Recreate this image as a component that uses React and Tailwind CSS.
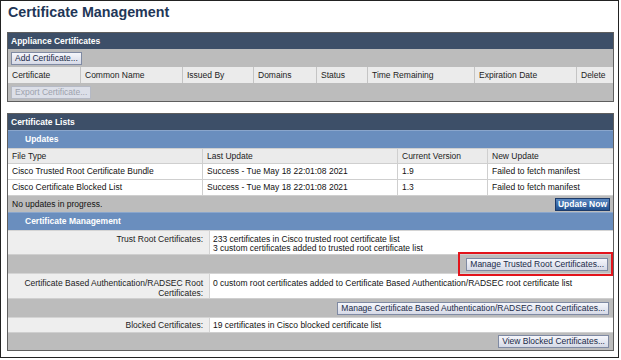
import React from "react";

const btn =
  "h-[13px] px-[3px] leading-[11px] border border-[#7f8aa3] bg-gradient-to-b from-[#f5f6fb] to-[#d6dae7] text-[#1a2a48] whitespace-nowrap";

function DarkHeader({ children }) {
  return (
    <div className="h-[16px] bg-[#3d4f68] text-white font-bold flex items-center pl-[3px]">
      {children}
    </div>
  );
}

function SubHeader({ children }) {
  return (
    <div className="h-[18px] bg-[#6a8ebe] text-white font-bold flex items-center pl-[17px] border-t border-[#8aa6cc]">
      {children}
    </div>
  );
}

const applianceCols = [
  ["Certificate", "w-[72px]"],
  ["Common Name", "w-[102px]"],
  ["Issued By", "w-[71px]"],
  ["Domains", "w-[63px]"],
  ["Status", "w-[51px]"],
  ["Time Remaining", "w-[107px]"],
  ["Expiration Date", "w-[102px]"],
  ["Delete", "flex-1"],
];

const updCols = ["w-[194px]", "w-[195px]", "w-[90px]", "flex-1"];

function UpdRow({ cells, header }) {
  return (
    <div
      className={
        "flex border-t border-[#cfcfcf] " +
        (header ? "h-[15px] bg-[#ebebeb] text-[#222]" : "h-[16px] bg-white")
      }
    >
      {cells.map((c, i) => (
        <div
          key={i}
          className={
            updCols[i] +
            " flex items-center pl-[4px] whitespace-nowrap " +
            (i > 0 ? "border-l border-[#cfcfcf]" : "")
          }
        >
          {c}
        </div>
      ))}
    </div>
  );
}

function LabelRow({ label, children, h, pt, leading }) {
  return (
    <div className={"flex border-t border-[#d4d4d4] " + h}>
      <div
        className={
          "w-[201px] bg-[#eeeeee] text-right pr-[6px] pl-[4px] text-[#222] " + pt + " " + leading
        }
      >
        {label}
      </div>
      <div className={"flex-1 bg-white pl-[3px] border-l border-[#d4d4d4] " + pt + " " + leading}>
        {children}
      </div>
    </div>
  );
}

function GrayRow({ h, children, pr = "pr-[5px]" }) {
  return (
    <div className={"bg-[#bcbcbc] flex items-center justify-end border-t border-[#cfcfcf] " + h + " " + pr}>
      {children}
    </div>
  );
}

export default function App() {
  return (
    <div className="w-[621px] h-[360px] bg-white font-['Liberation_Sans',Arial,sans-serif] text-[8.5px] text-[#111]">
      <div className="w-[619px] h-[358px] border border-[#222] pt-[2px] pl-[6px]">
        <h1 className="h-[18px] leading-[18px] text-[14.3px] font-bold text-[#1f3758] pl-[1px]">
          Certificate Management
        </h1>

        {/* Appliance Certificates */}
        <div className="mt-[11px] w-[607px] border border-[#5e5e5e]">
          <DarkHeader>Appliance Certificates</DarkHeader>
          <div className="h-[18px] bg-[#bcbcbc] flex items-center pl-[3px]">
            <button className={btn}>Add Certificate...</button>
          </div>
          <div className="h-[16px] flex bg-[#ebebeb] text-[#222]">
            {applianceCols.map(([t, w], i) => (
              <div
                key={t}
                className={
                  w +
                  " flex items-center pl-[4px] whitespace-nowrap " +
                  (i > 0 ? "border-l border-[#c4c4c4]" : "")
                }
              >
                {t}
              </div>
            ))}
          </div>
          <div className="h-[18px] bg-[#bcbcbc] flex items-center pl-[3px]">
            <button className="h-[13px] px-[3px] leading-[11px] border border-[#b5b9c4] bg-[#dcdfe8] text-[#9da2ad] whitespace-nowrap">
              Export Certificate...
            </button>
          </div>
        </div>

        {/* Certificate Lists */}
        <div className="mt-[11px] w-[607px] border border-[#5e5e5e]">
          <DarkHeader>Certificate Lists</DarkHeader>
          <SubHeader>Updates</SubHeader>
          <UpdRow header cells={["File Type", "Last Update", "Current Version", "New Update"]} />
          <UpdRow
            cells={[
              "Cisco Trusted Root Certificate Bundle",
              "Success - Tue May 18 22:01:08 2021",
              "1.9",
              "Failed to fetch manifest",
            ]}
          />
          <UpdRow
            cells={[
              "Cisco Certificate Blocked List",
              "Success - Tue May 18 22:01:08 2021",
              "1.3",
              "Failed to fetch manifest",
            ]}
          />
          <div className="h-[17px] bg-[#bcbcbc] flex items-center justify-between pl-[4px] pr-[3px] border-t border-[#cfcfcf]">
            <span>No updates in progress.</span>
            <button className="h-[13px] px-[2px] leading-[11px] border border-[#1c3a68] bg-gradient-to-b from-[#5a87c0] to-[#21508f] text-white font-bold whitespace-nowrap">
              Update Now
            </button>
          </div>

          <SubHeader>Certificate Management</SubHeader>
          <LabelRow label="Trust Root Certificates:" h="h-[24px]" pt="pt-[4px]" leading="leading-[9px]">
            <div>233 certificates in Cisco trusted root certificate list</div>
            <div>3 custom certificates added to trusted root certificate list</div>
          </LabelRow>
          <GrayRow h="h-[19px]" pr="pr-[5px]">
            <div className="relative">
              <button className={btn}>Manage Trusted Root Certificates...</button>
              <div className="absolute -left-[8px] -right-[5px] -top-[6px] -bottom-[5px] border-2 border-[#e3141b] pointer-events-none" />
            </div>
          </GrayRow>
          <LabelRow
            label="Certificate Based Authentication/RADSEC Root Certificates:"
            h="h-[25px]"
            pt="pt-[4px]"
            leading="leading-[10px]"
          >
            0 custom root certificates added to Certificate Based Authentication/RADSEC root certificate list
          </LabelRow>
          <GrayRow h="h-[19px]" pr="pr-[4px]">
            <button className={btn}>Manage Certificate Based Authentication/RADSEC Root Certificates...</button>
          </GrayRow>
          <LabelRow label="Blocked Certificates:" h="h-[15px]" pt="pt-[2px]" leading="leading-[11px]">
            19 certificates in Cisco blocked certificate list
          </LabelRow>
          <GrayRow h="h-[18px]" pr="pr-[4px]">
            <button className={btn}>View Blocked Certificates...</button>
          </GrayRow>
        </div>
      </div>
    </div>
  );
}
